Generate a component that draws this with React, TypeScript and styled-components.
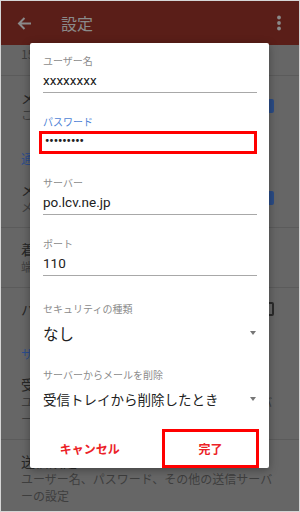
import styled, { createGlobalStyle } from "styled-components"

const GlobalStyle = createGlobalStyle`
  body {
    margin: 0;
    font-family: Roboto, "Noto Sans CJK JP", sans-serif;
  }
`

type Row = {
  title?: string
  sub?: string
  check?: 'on' | 'off'
  section?: string
  divider?: boolean
}

const rows: Row[] = [
  { sub: '15分ごと', divider: true },
  { title: 'メールを同期', sub: 'このアカウントのメールを同期します', check: 'on' },
  { section: '通知設定' },
  { title: 'メール通知', sub: 'メールの着信時にステータスバーで通知', check: 'on', divider: true },
  { title: '着信音を選択', sub: '端末のデフォルトの通知音', divider: true },
  { title: 'バイブレーション', check: 'off' },
  { section: 'サーバー設定' },
  { title: '受信設定', sub: 'ユーザー名、パスワード、その他の受信サーバーの設定', divider: true },
  { title: '送信設定', sub: 'ユーザー名、パスワード、その他の送信サーバーの設定' },
]

const App = () => {
  return (
    <>
      <GlobalStyle />
      <Screen>
        <Header>
          <BackIcon width="15" height="13" viewBox="0 0 15 13">
            <path d="M14 6.5H2M7.5 1L2 6.5L7.5 12" />
          </BackIcon>
          <Title>設定</Title>
          <MoreIcon width="6" height="16" viewBox="0 0 6 16">
            <circle cx="3" cy="2.5" r="1.9" />
            <circle cx="3" cy="8" r="1.9" />
            <circle cx="3" cy="13.5" r="1.9" />
          </MoreIcon>
        </Header>

        <List>
          {rows.map((r, i) =>
            r.section ? (
              <SectionHeader key={i}>{r.section}</SectionHeader>
            ) : (
              <Item key={i} $divider={!!r.divider} $tail={!r.title}>
                <ItemText>
                  {r.title && <Primary>{r.title}</Primary>}
                  {r.sub && <Secondary>{r.sub}</Secondary>}
                </ItemText>
                {r.check && <Checkbox $on={r.check === 'on'} />}
              </Item>
            )
          )}
        </List>

        <Dialog>
          <Field $top={0}>
            <Label>ユーザー名</Label>
            <Value $line>xxxxxxxx</Value>
          </Field>
          <Field $top={22}>
            <Label $active>パスワード</Label>
            <PasswordBox>•••••••••</PasswordBox>
          </Field>
          <Field $top={22}>
            <Label>サーバー</Label>
            <Value $line>po.lcv.ne.jp</Value>
          </Field>
          <Field $top={22}>
            <Label>ポート</Label>
            <Value $line>110</Value>
          </Field>
          <Field $top={26}>
            <Label>セキュリティの種類</Label>
            <Select>
              <SelectText $size={15.5}>なし</SelectText>
              <Caret />
            </Select>
          </Field>
          <Field $top={20}>
            <Label>サーバーからメールを削除</Label>
            <Select>
              <SelectText $size={13.5}>受信トレイから削除したとき</SelectText>
              <Caret />
            </Select>
          </Field>
          <Buttons>
            <ActionButton>キャンセル</ActionButton>
            <ActionButton $marked>完了</ActionButton>
          </Buttons>
        </Dialog>
      </Screen>
    </>
  )
}

export default App


/* styles */
const Screen = styled.div`
  position: relative;
  width: 300px;
  height: 512px;
  box-sizing: border-box;
  border: 1px solid #d6d6d6;
  background: #666666;
  overflow: hidden;
`

const Header = styled.div`
  height: 44px;
  background: #5a1e18;
  display: flex;
  align-items: center;
  padding: 0 17px 0 16px;
`

const BackIcon = styled.svg`
  fill: none;
  stroke: #8a8a8a;
  stroke-width: 2;
`

const Title = styled.div`
  margin-left: 29px;
  font-family: "Noto Sans CJK JP", sans-serif;
  font-size: 16px;
  color: #8a8a8a;
`

const MoreIcon = styled.svg`
  margin-left: auto;
  fill: #8a8a8a;
`

const List = styled.div`
  display: flex;
  flex-direction: column;
`

const Item = styled.div<{ $divider: boolean; $tail: boolean }>`
  display: flex;
  align-items: center;
  padding: ${p => (p.$tail ? '0 20px 13px' : '12px 20px')};
  border-bottom: 1px solid ${p => (p.$divider ? '#5b5b5b' : 'transparent')};
  margin-bottom: ${p => (p.$divider ? 0 : -1)}px;
`

const ItemText = styled.div`
  flex: 1;
  min-width: 0;
  font-family: "Noto Sans CJK JP", sans-serif;
`

const Primary = styled.div`
  font-size: 14px;
  line-height: 18px;
  color: #262626;
`

const Secondary = styled.div`
  font-size: 12px;
  line-height: 17px;
  color: #3e3e3e;
`

const SectionHeader = styled.div`
  padding: 16px 20px 1px;
  font-family: "Noto Sans CJK JP", sans-serif;
  font-size: 12px;
  line-height: 16px;
  color: #2c4d8c;
`

const Checkbox = styled.div<{ $on: boolean }>`
  flex: none;
  width: 14px;
  height: 14px;
  margin-right: 5px;
  box-sizing: border-box;
  border-radius: 2px;
  background: ${p => (p.$on ? '#2b4c86' : 'transparent')};
  border: 2px solid ${p => (p.$on ? '#2b4c86' : '#2a2a2a')};
`

const Dialog = styled.div`
  position: absolute;
  left: 29px;
  top: 42px;
  width: 239px;
  padding-top: 11px;
  background: #ffffff;
  border-radius: 2px;
  box-shadow: 0 2px 8px rgba(0, 0, 0, 0.35);
`

const Field = styled.div<{ $top: number }>`
  margin-top: ${p => p.$top}px;
  padding: 0 12px 0 13px;
`

const Label = styled.div<{ $active?: boolean }>`
  font-family: "Noto Sans CJK JP", sans-serif;
  font-size: 10px;
  line-height: 14px;
  color: ${p => (p.$active ? '#4d7fd6' : '#8c8c8c')};
`

const Value = styled.div<{ $line?: boolean }>`
  height: 24px;
  line-height: 24px;
  font-size: 13.5px;
  color: #212121;
  border-bottom: 1px solid ${p => (p.$line ? '#a8a8a8' : 'transparent')};
`

const PasswordBox = styled.div`
  margin: 2px 0 0 -4px;
  height: 23px;
  box-sizing: border-box;
  border: 3px solid #ff0000;
  padding-left: 3px;
  font-family: Roboto, sans-serif;
  font-size: 12px;
  line-height: 15px;
  font-weight: 700;
  color: #222;
`

const Select = styled.div`
  margin-top: 2px;
  height: 30px;
  display: flex;
  align-items: center;
  justify-content: space-between;
`

const SelectText = styled.div<{ $size: number }>`
  font-family: "Noto Sans CJK JP", sans-serif;
  font-size: ${p => p.$size}px;
  color: #212121;
`

const Caret = styled.div`
  width: 0;
  height: 0;
  margin-right: 1px;
  border-left: 3.5px solid transparent;
  border-right: 3.5px solid transparent;
  border-top: 4px solid #767676;
`

const Buttons = styled.div`
  margin-top: 15px;
  display: grid;
  grid-template-columns: 1fr 1fr;
  height: 39px;
`

const ActionButton = styled.div<{ $marked?: boolean }>`
  display: flex;
  align-items: center;
  justify-content: center;
  box-sizing: border-box;
  margin: ${p => (p.$marked ? '0 10px 0 12.5px' : 0)};
  border: ${p => (p.$marked ? '3px solid #ff0000' : 'none')};
  font-family: "Noto Sans CJK JP", sans-serif;
  font-size: 12px;
  font-weight: 700;
  color: #ec2227;
`
